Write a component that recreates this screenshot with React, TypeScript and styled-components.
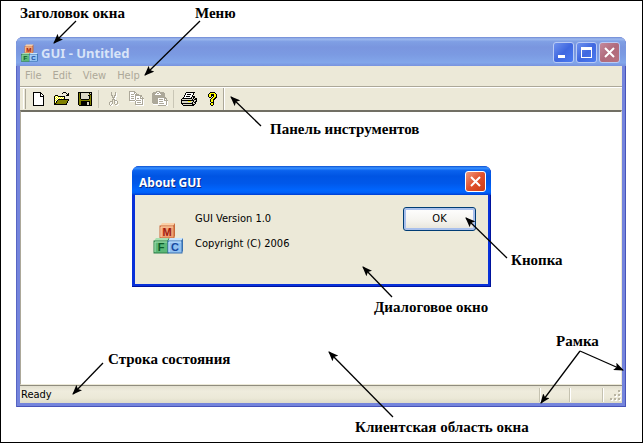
import React from "react";
import styled, { createGlobalStyle } from "styled-components";

const GlobalStyle = createGlobalStyle`
  *, *::before, *::after { box-sizing: border-box; }
  body { margin: 0; background: #fff; }
  button { font: inherit; color: inherit; margin: 0; padding: 0; border: 0; background: none; }
`;

const Page = styled.main`
  position: relative;
  display: flex;
  min-height: 100vh;
  padding: 36px 16px 35px 15px;
  border: 1px solid #000;
  background: #fff;
  color: #000;
  font: 11px/14px "DejaVu Sans Condensed", "DejaVu Sans", sans-serif;
`;

const Window = styled.section`
  display: flex;
  flex: 1;
  flex-direction: column;
  padding: 0 4px 4px;
  border-radius: 7px 7px 0 0;
  background: #7484dc;
  box-shadow: inset 1px 0 #5765c4, inset -1px -1px #4854b8;
`;

const TitleBar = styled.header<{ $active?: boolean }>`
  display: flex;
  align-items: center;
  gap: 2px;
  height: 29px;
  margin: 0 -4px;
  padding: ${(p) => (p.$active ? "2px 5px 0 7px" : "2px 6px 0 5px")};
  border-radius: 7px 7px 0 0;
  color: ${(p) => (p.$active ? "#fff" : "#d8e4f8")};
  text-shadow: ${(p) => (p.$active ? "1px 1px #0a2a88" : "none")};
  background: ${(p) =>
    p.$active
      ? "linear-gradient(#0a4fd0 0, #3a92ff 7%, #0a62ee 16%, #0054e3 35%, #0058ea 60%, #0066ff 84%, #0060f8 92%, #003dd0 100%)"
      : "linear-gradient(#6e88d4 0, #9db9ee 7%, #7f9fe4 16%, #7a96df 35%, #7b9ae2 60%, #82a6ea 88%, #7993de 100%)"};
`;

const Title = styled.h1`
  flex: 1;
  margin: 0;
  font: bold 13px/18px "Noto Sans", sans-serif;
`;

const DialogTitle = styled.h2`
  flex: 1;
  margin: 0;
  padding-top: 2px;
  font: bold 12px/18px "Noto Sans", sans-serif;
`;

const CaptionButton = styled.button<{ $tone: "blue" | "rose" | "red" }>`
  width: 21px;
  height: 21px;
  border: 1px solid ${(p) => (p.$tone === "red" ? "#fff" : "#b9cbf5")};
  border-radius: 3px;
  background: ${(p) =>
    ({
      blue: "linear-gradient(135deg, #6f92ee, #4068e0 50%, #4a7af0)",
      rose: "linear-gradient(135deg, #c58a9c, #b06a7c 50%, #b8727e)",
      red: "linear-gradient(135deg, #f09a80, #e0502c 50%, #cc3c14)",
    })[p.$tone]};
  svg { display: block; }
`;

const MenuBar = styled.nav`
  display: flex;
  gap: 1px;
  height: 20px;
  background: #ece9d8;
  color: #aca899;
`;

const MenuItem = styled.button`
  padding: 0 5px;
`;

const ToolBar = styled.div`
  display: flex;
  align-items: center;
  height: 24px;
  padding-left: 3px;
  border-top: 1px solid #aca899;
  box-shadow: inset 0 1px #fff;
  background: #ece9d8;
`;

const Grip = styled.span`
  width: 3px;
  height: 20px;
  margin-right: 1px;
  border-left: 1px solid #fff;
  border-right: 1px solid #aca899;
`;

const ToolButton = styled.button`
  display: grid;
  place-items: center;
  width: 23px;
  height: 22px;
`;

const Divider = styled.span<{ $end?: boolean }>`
  width: 2px;
  height: ${(p) => (p.$end ? "22px" : "18px")};
  margin: ${(p) => (p.$end ? "0" : "0 2px")};
  border-left: 1px solid ${(p) => (p.$end ? "#aca899" : "#c9c6b6")};
  border-right: 1px solid ${(p) => (p.$end ? "#fff" : "#ece9d8")};
`;

const Client = styled.div`
  position: relative;
  flex: 1;
  border: 1px solid #aca899;
  border-top: 2px solid #716f64;
  border-right-color: #ece9d8;
  border-bottom-color: #ece9d8;
  background: #fff;
`;

const StatusBar = styled.footer`
  display: flex;
  align-items: center;
  height: 18px;
  padding-top: 1px;
  border-top: 1px solid #8f8c7e;
  background: linear-gradient(#e2dfcf, #efecdd 30%, #ece9d8 70%, #dedbc9);
`;

const StatusText = styled.span`
  flex: 1;
  padding-left: 1px;
`;

const StatusPane = styled.span<{ $width: number }>`
  width: ${(p) => p.$width}px;
  height: 14px;
  border-left: 1px solid #c5c2b0;
  box-shadow: inset 1px 0 #fff;
`;

const Dialog = styled.section`
  position: absolute;
  top: 54px;
  left: 111px;
  width: 359px;
  padding: 0 3px 3px;
  border-radius: 7px 7px 0 0;
  background: #0831d9;
  box-shadow: inset -1px -1px #00139c;
`;

const DialogHeader = styled(TitleBar)`
  margin: 0 -3px;
`;

const DialogBody = styled.div`
  display: flex;
  align-items: flex-start;
  height: 89px;
  padding: 12px 12px 0 18px;
  background: #ece9d8;
`;

const AboutText = styled.div`
  flex: 1;
  padding: 1px 0 0 10px;
  p { margin: 4px 0 11px; }
`;

const BlocksSlot = styled.div`
  padding-top: 15px;
`;

const OkButton = styled.button`
  width: 73px;
  height: 24px;
  border: 1px solid #003c74;
  border-radius: 3px;
  background: linear-gradient(#fff, #f4f3ee 60%, #e6e3d8);
  box-shadow: inset 0 0 0 2px #a9c0ec;
`;

const Overlay = styled.svg`
  position: absolute;
  top: -1px;
  left: -1px;
  width: calc(100% + 2px);
  height: calc(100% + 2px);
  pointer-events: none;
`;

const Callout = styled.span<{ $x: number; $y: number }>`
  position: absolute;
  left: ${(p) => p.$x}px;
  top: ${(p) => p.$y}px;
  font: bold 15px/18px "Liberation Serif", serif;
  white-space: nowrap;
`;

const palette: Record<string, string> = {
  k: "#000",
  w: "#fff",
  y: "#ffff00",
  o: "#808000",
  s: "#d8d5c6",
  g: "#aca899",
};

const art = {
  new: [
    "kkkkkkkk....",
    "kwwwwwwkk...",
    "kwwwwwwkwk..",
    "kwwwwwwkwwk.",
    "kwwwwwwkkkk.",
    "kwwwwwwwwwk.",
    "kwwwwwwwwwk.",
    "kwwwwwwwwwk.",
    "kwwwwwwwwwk.",
    "kwwwwwwwwwk.",
    "kwwwwwwwwwk.",
    "kwwwwwwwwwk.",
    "kwwwwwwwwwk.",
    "kkkkkkkkkkk.",
  ],
  open: [
    ".........kkk....",
    "........k...k.k.",
    ".............kk.",
    ".kkk........kkk.",
    "kywykkkkkkk.....",
    "kwywywywywk.....",
    "kywywywywyk.....",
    "kwywkkkkkkkkkkk.",
    "kywkooooooooook.",
    "kwkooooooooook..",
    "kykooooooooook..",
    "kkooooooooook...",
    "kkkkkkkkkkkkk...",
  ],
  save: [
    "kkkkkkkkkkkkkk",
    "kokssssssssksk",
    "kokssssssssokk",
    "kokssssssskkok",
    "koksssssssskok",
    "koksssssssskok",
    "koksssssssskok",
    "kookkkkkkkkook",
    "kooooooooooook",
    "kookkkkkkkkkok",
    "kookkkkkksskok",
    "kookkkkkksskok",
    "kookkkkkksskok",
    ".kkkkkkkkkkkkk",
  ],
  cut: [
    "..g...g...",
    "..g...gw..",
    "..g...gw..",
    "..gg.ggw..",
    "...g.gww..",
    "...gggw...",
    "....gww...",
    "...gggw...",
    "...g.ggg..",
    ".ggg.gwwg.",
    "g.wg.g.wg.",
    "gw.g.gw.g.",
    "gwgw..gg.w",
    ".gww...ww.",
  ],
  copy: [
    "gggggg..........",
    "gwwwwgg.........",
    "gwwwwgwg........",
    "gwgggwgggg......",
    "gwwwwwggggggg...",
    "gwgggwgwwwwgg...",
    "gwwwwwgwwwwgwg..",
    "gwgggwgwggwgggg.",
    "gwwwwwgwwwwwwgw.",
    "ggggggwgggggwgw.",
    ".wwwwwgwwwwwwgw.",
    "......gwggggwgw.",
    "......gwwwwwwgw.",
    "......ggggggggw.",
    ".......wwwwwwww.",
  ],
  paste: [
    "....gggg........",
    ".ggggwwggggg....",
    "ggggwggwggggg...",
    "gggwwwwwwgggg...",
    "ggggggggggggg...",
    "ggggggggggggg...",
    "gggggggggggggg..",
    "ggggggwwwwwwggg.",
    "ggggggwggggwgwg.",
    "ggggggwwwwwwgggg",
    "ggggggwggggwwwgw",
    "ggggggwwwwwwwwgw",
    ".gggggwgggggwwgw",
    ".wwwwwwwwwwwwwgw",
    "......ggggggggww",
  ],
  print: [
    ".....kkkkkkkkk..",
    "....kwwwwwwwk...",
    "....kwkkkkwwk...",
    "...kwwwwwwwk....",
    "...kwkkkkwwkkk..",
    "..kwwwwwwwkskk..",
    ".kkkkkkkkkkskskk",
    "ksssssssssskskkk",
    "kkkkkkkkkkkkkssk",
    "kssssssyyysskskk",
    "ksssssssssskskk.",
    "kkkkkkkkkkkkssk.",
    ".kssssssssskkk..",
    "..kkkkkkkkkkk...",
  ],
  help: [
    "...kkkkk..",
    "..kyyyyyk.",
    ".kyykkkyyk",
    ".kyykkkyyk",
    ".kyyk.kyyk",
    "..kk.kyykk",
    "....kyykk.",
    "...kyykk..",
    "...kyyk...",
    "...kyyk...",
    "....kkk...",
    "...kyyk...",
    "...kyyk...",
    "....kk....",
  ],
};

type IconName = keyof typeof art;

function PixelIcon({ name }: { name: IconName }) {
  const rows = art[name];
  const width = rows[0].length;
  return (
    <svg width={width} height={rows.length} shapeRendering="crispEdges" aria-hidden="true">
      {rows.flatMap((row, y) =>
        [...row].map((cell, x) =>
          palette[cell] ? (
            <rect key={`${x}-${y}`} x={x} y={y} width="1" height="1" fill={palette[cell]} />
          ) : null,
        ),
      )}
    </svg>
  );
}

const blocks = [
  { letter: "M", x: 7, y: 1, face: "#f0a070", top: "#fbd0a8", side: "#c86838", ink: "#a01c10" },
  { letter: "F", x: 1, y: 16, face: "#5cb878", top: "#a8e0b0", side: "#2c8048", ink: "#0c5c28" },
  { letter: "C", x: 15, y: 16, face: "#90c0f0", top: "#c8e4ff", side: "#3870b0", ink: "#1848a0" },
];

function BlocksIcon({ size }: { size: number }) {
  return (
    <svg width={size} height={size} viewBox="0 0 32 32" aria-hidden="true">
      {blocks.map((b) => (
        <g key={b.letter} transform={`translate(${b.x} ${b.y})`}>
          <path d="M0 3L2 0H15L13 3Z" fill={b.top} />
          <path d="M13 3L15 0V13L13 15Z" fill={b.side} />
          <rect x="0" y="3" width="14" height="12" fill={b.face} stroke={b.side} strokeWidth="1" />
          <path d="M1 14V4H13" fill="none" stroke={b.top} />
          <text
            x="7"
            y="13"
            textAnchor="middle"
            fontFamily="Liberation Sans"
            fontWeight="bold"
            fontSize="11"
            fill={b.ink}
          >
            {b.letter}
          </text>
        </g>
      ))}
    </svg>
  );
}

const glyphs = {
  minimize: <rect x="4" y="12" width="7" height="3" fill="#fff" />,
  maximize: <path d="M4 4H15V15H4ZM5 7V14H14V7Z" fill="#fff" fillRule="evenodd" />,
  close: <path d="M5 5L14 14M14 5L5 14" stroke="#fff" strokeWidth="2" />,
};

function Caption({ kind, tone, label }: { kind: keyof typeof glyphs; tone: "blue" | "rose" | "red"; label: string }) {
  return (
    <CaptionButton type="button" $tone={tone} aria-label={label}>
      <svg width="19" height="19" aria-hidden="true">
        {glyphs[kind]}
      </svg>
    </CaptionButton>
  );
}

const toolGroups: IconName[][] = [
  ["new", "open", "save"],
  ["cut", "copy", "paste"],
  ["print", "help"],
];

const callouts = [
  { text: "Заголовок окна", x: 19, y: 3 },
  { text: "Меню", x: 194, y: 3 },
  { text: "Панель инструментов", x: 269, y: 119 },
  { text: "Кнопка", x: 510, y: 250 },
  { text: "Диалоговое окно", x: 373, y: 297 },
  { text: "Рамка", x: 555, y: 331 },
  { text: "Строка состояния", x: 107, y: 349 },
  { text: "Клиентская область окна", x: 354, y: 417 },
];

const arrows = [
  "M76 21L54 43",
  "M200 21L145 75",
  "M261 126L231 97",
  "M507 258L466 218",
  "M392 297L363 267",
  "M103 363L73 394",
  "M393 417L329 352",
  "M580 351L541 403",
  "M580 351L623 370",
];

export default function App() {
  return (
    <Page>
      <GlobalStyle />
      <Window>
        <TitleBar>
          <BlocksIcon size={18} />
          <Title>GUI - Untitled</Title>
          <Caption kind="minimize" tone="blue" label="Minimize" />
          <Caption kind="maximize" tone="blue" label="Maximize" />
          <Caption kind="close" tone="rose" label="Close" />
        </TitleBar>
        <MenuBar>
          {["File", "Edit", "View", "Help"].map((item) => (
            <MenuItem key={item} type="button">
              {item}
            </MenuItem>
          ))}
        </MenuBar>
        <ToolBar role="toolbar">
          <Grip />
          {toolGroups.map((group, i) => (
            <React.Fragment key={group[0]}>
              {group.map((name) => (
                <ToolButton key={name} type="button" aria-label={name}>
                  <PixelIcon name={name} />
                </ToolButton>
              ))}
              <Divider $end={i === toolGroups.length - 1} />
            </React.Fragment>
          ))}
        </ToolBar>
        <Client>
          <Dialog role="dialog" aria-labelledby="about-title">
            <DialogHeader as="header" $active>
              <DialogTitle id="about-title">About GUI</DialogTitle>
              <Caption kind="close" tone="red" label="Close dialog" />
            </DialogHeader>
            <DialogBody>
              <BlocksSlot>
                <BlocksIcon size={32} />
              </BlocksSlot>
              <AboutText>
                <p>GUI Version 1.0</p>
                <p>Copyright (C) 2006</p>
              </AboutText>
              <OkButton type="button">OK</OkButton>
            </DialogBody>
          </Dialog>
        </Client>
        <StatusBar>
          <StatusText>Ready</StatusText>
          <StatusPane $width={30} />
          <StatusPane $width={33} />
          <StatusPane $width={7} />
          <svg width="13" height="13" shapeRendering="crispEdges" aria-hidden="true">
            {[[9, 1], [5, 5], [9, 5], [1, 9], [5, 9], [9, 9]].map(([x, y]) => (
              <g key={`${x}-${y}`}>
                <rect x={x + 1} y={y + 1} width="2" height="2" fill="#fff" />
                <rect x={x} y={y} width="2" height="2" fill="#b8b4a2" />
              </g>
            ))}
          </svg>
        </StatusBar>
      </Window>
      <Overlay aria-hidden="true">
        <defs>
          <marker id="head" markerWidth="10" markerHeight="8" refX="9" refY="4" orient="auto" markerUnits="userSpaceOnUse">
            <path d="M10 4L0 0L2 4L0 8Z" />
          </marker>
        </defs>
        {arrows.map((d) => (
          <path key={d} d={d} fill="none" stroke="#000" strokeWidth="1.3" markerEnd="url(#head)" />
        ))}
      </Overlay>
      {callouts.map((c) => (
        <Callout key={c.text} $x={c.x} $y={c.y}>
          {c.text}
        </Callout>
      ))}
    </Page>
  );
}
